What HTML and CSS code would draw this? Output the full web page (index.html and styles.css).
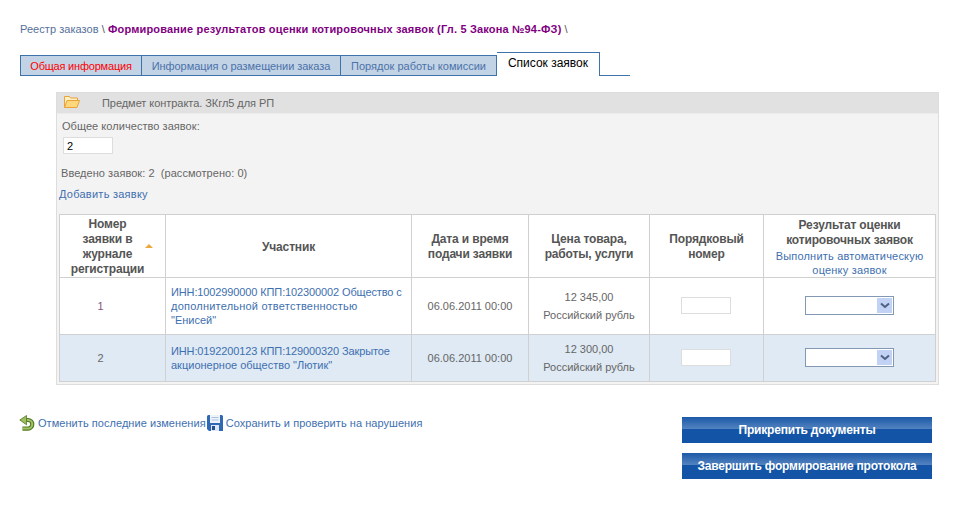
FILE: index.html
```html
<!DOCTYPE html>
<html lang="ru">
<head>
<meta charset="utf-8">
<title>Список заявок</title>
<link rel="stylesheet" href="styles.css">
</head>
<body>
<nav class="crumbs"><a href="#">Реестр заказов</a> \ <b>Формирование результатов оценки котировочных заявок (Гл. 5 Закона №94-ФЗ)</b> \</nav>
<div class="tabs">
  <a class="tab tab-alert tab-1" href="#">Общая информация</a>
  <a class="tab tab-2" href="#">Информация о размещении заказа</a>
  <a class="tab tab-3" href="#">Порядок работы комиссии</a>
  <a class="tab tab-active" href="#">Список заявок</a>
  <span class="tab-rest"></span>
</div>
<section class="panel">
  <header class="panel-head">
    <svg class="folder" width="16" height="12" viewBox="0 0 16 12"><path d="M.5 11.500V.5h5l1 1.500h7v2" fill="#fff0c4" stroke="#eba23a"/><path d="M.5 11.500l2.500-7h12.500l-2.500 7z" fill="#fdd77c" stroke="#eba23a"/></svg>
    <span>Предмет контракта. ЗКгл5 для РП</span>
  </header>
  <div class="panel-body">
    <label class="count-label" for="count">Общее количество заявок:</label>
    <input class="count" id="count" value="2">
    <p class="entered">Введено заявок: 2 &nbsp;(рассмотрено: 0)</p>
    <a class="add" href="#">Добавить заявку</a>
    <table class="bids">
      <colgroup><col class="c1"><col class="c2"><col class="c3"><col class="c4"><col class="c5"><col class="c6"></colgroup>
      <thead>
        <tr>
          <th class="sorted">Номер<br>заявки в<br>журнале<br>регистрации<i class="sort"></i></th>
          <th>Участник</th>
          <th>Дата и время<br>подачи заявки</th>
          <th>Цена товара,<br>работы, услуги</th>
          <th>Порядковый<br>номер</th>
          <th>Результат оценки<br>котировочных заявок<a class="auto" href="#">Выполнить автоматическую<br>оценку заявок</a></th>
        </tr>
      </thead>
      <tbody>
        <tr class="r1">
          <td class="idx">1</td>
          <td class="who"><a href="#"><span class="tight">ИНН:1002990000 КПП:102300002 Общество с</span><br><span class="wide">дополнительной ответственностью</span><br>"Енисей"</a></td>
          <td>06.06.2011 00:00</td>
          <td class="price">12 345,00<br>Российский рубль</td>
          <td class="ctl ctl-num"><input class="num"></td>
          <td class="ctl"><span class="sel"><select></select><i class="sel-btn"><svg width="10" height="7" viewBox="0 0 10 7"><path d="M1 1.500l4 3.500 4-3.500" fill="none" stroke="#4d6185" stroke-width="2"/></svg></i></span></td>
        </tr>
        <tr class="r2">
          <td class="idx">2</td>
          <td class="who"><a href="#"><span class="tight">ИНН:0192200123 КПП:129000320 Закрытое</span><br>акционерное общество "Лютик"</a></td>
          <td>06.06.2011 00:00</td>
          <td class="price">12 300,00<br>Российский рубль</td>
          <td class="ctl ctl-num"><input class="num"></td>
          <td class="ctl"><span class="sel"><select></select><i class="sel-btn"><svg width="10" height="7" viewBox="0 0 10 7"><path d="M1 1.500l4 3.500 4-3.500" fill="none" stroke="#4d6185" stroke-width="2"/></svg></i></span></td>
        </tr>
      </tbody>
    </table>
  </div>
</section>
<footer class="actions">
  <div class="links">
    <svg class="undo" width="16" height="16" viewBox="0 0 16 16"><path d="M6 5h3a4.300 4.300 0 0 1 0 8.600H3.500" fill="none" stroke="#4f7a24" stroke-width="4.200"/><path d="M6 5h3a4.300 4.300 0 0 1 0 8.600H3.500" fill="none" stroke="#a3c267" stroke-width="2"/><path d="M7.500.5L.8 5l6.700 4.800z" fill="#9dbd5e" stroke="#4f7a24" stroke-width=".8"/></svg>
    <a href="#">Отменить последние изменения</a>
    <svg class="save" width="16" height="16" viewBox="0 0 16 16"><path d="M0 1.500A1.500 1.500 0 0 1 1.500 0h13A1.500 1.500 0 0 1 16 1.500V16H2l-2-2z" fill="#2f68b4"/><rect x="3" y="0" width="10" height="8" fill="#eef3fa"/><path d="M4.500 2.500h7M4.500 5h7" stroke="#a9c1df"/><rect x="4" y="10" width="8" height="6" fill="#dfe8f4"/><rect x="5" y="11" width="3" height="4" fill="#23508f"/></svg>
    <a href="#">Сохранить и проверить на нарушения</a>
  </div>
  <div class="buttons">
    <button class="btn">Прикрепить документы</button>
    <button class="btn">Завершить формирование протокола</button>
  </div>
</footer>
</body>
</html>
```

FILE: styles.css
```css
* { box-sizing: border-box; }
html, body { margin: 0; padding: 0; }
body {
  font-family: "Liberation Sans", Arial, sans-serif;
  font-size: 11px;
  letter-spacing: .05px;
  color: #666;
  background: #fff;
  height: 512px;
  overflow: hidden;
}
a { color: #3e6fb0; text-decoration: none; }
.crumbs { padding: 22px 20px 0; height: 52px; line-height: 14px; color: #555; letter-spacing: .05px; }
.crumbs a { color: #56709a; }
.crumbs b { color: #800080; letter-spacing: .18px; }
.tabs { display: flex; align-items: flex-end; height: 24px; margin-left: 20px; }
.tab {
  display: block;
  height: 21px;
  line-height: 21px;
  text-align: center;
  border: 1px solid #3d72ab;
  border-left-width: 0;
  background: #c3d3e6;
  color: #4a72a8;
  letter-spacing: -.05px;
}
.tab-1 { width: 122px; border-left-width: 1px; letter-spacing: -.2px; }
.tab-2 { width: 199px; }
.tab-3 { width: 156px; letter-spacing: 0; }
.tab-alert { color: #f00; }
.tab-active {
  width: 103px;
  height: 24px;
  line-height: 21px;
  background: #fff;
  color: #000;
  font-size: 12px;
  letter-spacing: 0;
  border: 1px solid #3d72ab;
  border-bottom: 0;
  border-left-width: 0;
}
.tab-rest { width: 30px; border-bottom: 1px solid #3d72ab; }
.panel {
  width: 883px;
  height: 293px;
  margin: 16px 0 0 56px;
  background: #f3f3f3;
  border: 1px solid #ddd;
}
.panel-head {
  display: flex;
  align-items: center;
  height: 21px;
  padding-left: 7px;
  background: #e1e1e1;
  border-bottom: 1px solid #ececec;
  letter-spacing: -.05px;
}
.panel-head span { margin-left: 22px; }
.folder { flex: none; margin-top: -3px; }
.panel-body { padding: 5px 2px 0; }
.count-label { display: block; margin-left: 3px; line-height: 14px; }
.count {
  display: block;
  width: 50px;
  height: 17px;
  margin: 4px 0 0 4px;
  padding: 0 3px;
  border: 1px solid #ddd;
  background: #fff;
  font: 11px "Liberation Sans", Arial, sans-serif;
  color: #000;
}
.entered { margin: 12px 0 0 2px; line-height: 14px; }
.add { display: block; margin-top: 7px; line-height: 14px; letter-spacing: .25px; }
.bids {
  width: 877px;
  margin-top: 13px;
  table-layout: fixed;
  border-collapse: collapse;
  background: #fff;
  letter-spacing: 0;
}
.c1 { width: 106px; }
.c2 { width: 246px; }
.c3 { width: 117px; }
.c4 { width: 121px; }
.c5 { width: 114px; }
.c6 { width: 172px; }
.bids th, .bids td {
  border: 1px solid #d0d0d0;
  text-align: center;
  vertical-align: middle;
  padding: 0 5px;
}
.bids th { font-size: 12px; line-height: 15px; letter-spacing: -.15px; color: #555; height: 63px; padding-top: 2px; }
.bids .sorted { position: relative; padding-right: 15px; }
.sort {
  position: absolute;
  left: 85px;
  top: 29px;
  width: 0;
  height: 0;
  border-left: 4px solid transparent;
  border-right: 4px solid transparent;
  border-bottom: 4px solid #eba83c;
}
.auto { display: block; margin-top: 1px; font-size: 11px; font-weight: 400; line-height: 14px; letter-spacing: .2px; }
.r1 { height: 57px; }
.r2 { height: 47px; background: #dfeaf4; }
.bids .idx { padding-right: 29px; }
.bids .who { text-align: left; line-height: 14px; white-space: nowrap; }
.tight { letter-spacing: -.12px; }
.wide { letter-spacing: .22px; }
.r1 .idx { color: #84557a; }
.price { line-height: 18px; }
.bids .ctl { padding-bottom: 2px; }
.bids .ctl-num { padding-left: 4px; padding-right: 6px; }
.num {
  display: block;
  width: 50px;
  height: 17px;
  margin: 0 auto;
  border: 1px solid #ddd;
  background: #fff;
}
.sel { position: relative; display: block; width: 89px; height: 19px; margin: 0 auto; }
.sel select {
  display: block;
  appearance: none;
  width: 89px;
  height: 19px;
  border: 1px solid #8399b3;
  border-radius: 0;
  background: #fff;
}
.sel-btn {
  position: absolute;
  top: 2px;
  right: 2px;
  width: 15px;
  height: 15px;
  background: #c1d2f4;
  display: flex;
  align-items: center;
  justify-content: center;
}
.actions { display: flex; justify-content: space-between; margin-top: 32px; padding: 0 26px 0 19px; }
.links { display: flex; align-items: center; align-self: flex-start; height: 14px; margin-top: -1px; color: #666; }
.links a { margin-left: 3px; }
.links .save { margin-left: 1px; }
.buttons { display: flex; flex-direction: column; gap: 10px; }
.btn {
  display: block;
  width: 250px;
  height: 26px;
  padding: 0;
  border: 0;
  background: linear-gradient(#1b59a8 0, #5282bf 45%, #1454a6 46%, #1454a6 100%);
  color: #fff;
  font: bold 12px "Liberation Sans", Arial, sans-serif;
  letter-spacing: -.2px;
}
```
